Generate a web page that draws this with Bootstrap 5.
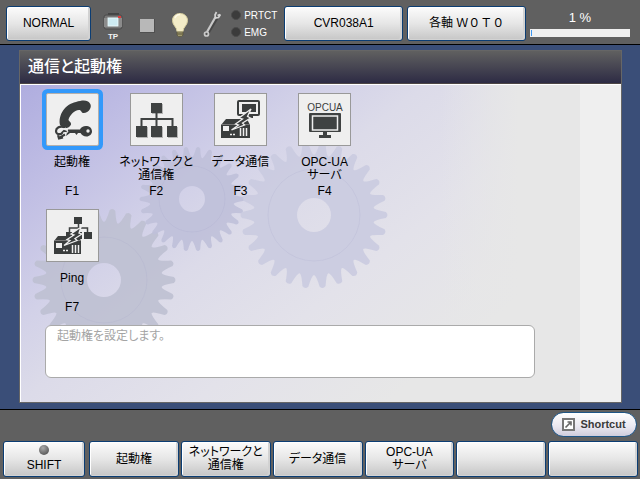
<!DOCTYPE html>
<html lang="ja">
<head>
<meta charset="utf-8">
<meta name="viewport" content="width=device-width, initial-scale=1">
<title>通信と起動権</title>
<link rel="stylesheet" href="https://cdn.jsdelivr.net/npm/bootstrap@5.3.0/dist/css/bootstrap.min.css">
<style>
  body { background: #3a4e78; color: #000; font-family: "Liberation Sans", "Noto Sans CJK JP", sans-serif; font-size: 12px; line-height: 13px; }
  .kana { font-feature-settings: "palt"; }
  .top-bar { background: #606060; border-bottom: 1px solid #000; height: 45px; padding: 6px 10px 3px 6px; }
  .bottom-bar { background: #606060; border-top: 1px solid #000; padding: 2px 2px 3px 3px; }
  .key-btn { --bs-btn-padding-x: 0; --bs-btn-padding-y: 0; --bs-btn-font-size: 12px; --bs-btn-line-height: 13px; --bs-btn-border-radius: 3px;
    --bs-btn-color: #000; --bs-btn-border-color: #0b3d73; --bs-btn-hover-color: #000; --bs-btn-hover-border-color: #0b3d73;
    background: linear-gradient(#fcfcfc, #e6e6e6 50%, #c6c6c6); box-shadow: inset 1px 1px #fff, inset -2px -1px #d2d2d2; }
  .g-mode { flex: 84 1 0; }
  .g-status { flex: 195 1 0; gap: 10px; }
  .g-status > :first-child { margin-left: 10px; }
  .g-prog { flex: 118 1 0; }
  .g-over { flex: 101 1 0; }
  .top-bar .key-btn { height: 35px; }
  .bottom-bar .key-btn { height: 36px; }
  .g-shift { flex: 82 1 0; margin-right: 2px; }
  .g-soft { flex: 90 1 0; }
  .soft-row { gap: 2px; }
  .led { width: 10px; height: 10px; background: #3b3b3b; border: 1px solid #4b4b4b; }
  .led-text { font-size: 10px; color: #fff; }
  .led-row { gap: 3px; }
  .shift-led { width: 10px; height: 10px; background: radial-gradient(circle at 40% 30%, #aaa, #606060 70%); }
  .over-text { font-size: 13px; line-height: 15px; color: #fff; }
  .progress { --bs-progress-height: 8px; --bs-progress-bg: #efefef; --bs-progress-border-radius: 0; --bs-progress-bar-bg: #3b96f0; padding: 1px; }
  .work { padding: 5px 18px 6px 19px; }
  .panel { border: 1px solid #666; }
  .panel-head { background: linear-gradient(#606060, #2d2b44); border-bottom: 1px solid #4c4545; color: #fff; font-size: 16px; line-height: 32px; height: 33px; padding-left: 8px; margin: 0; }
  .panel-body { background: #efefef; border-top: 1px solid #fff; border-left: 1px solid #fff; padding-right: 41px; }
  .scene { background: linear-gradient(90deg, rgba(231,231,231,0) 75%, #e7e7e7 89%), linear-gradient(142deg, #afaddf, #c0bee4 15%, #d2d1e8 31%, #dcdbe9 42%, #e3e2ea 60%, #e7e7e7 80%); padding: 8px 45px 24px 9px; }
  .gears { z-index: 0; }
  .tiles { display: grid; grid-template-columns: repeat(6, minmax(0, 1fr)); row-gap: 11px; }
  .tile { background: none; border: 0; padding: 0; color: #000; }
  .tile-icon { width: 53px; height: 53px; background: #efefef; border: 1px solid #999; }
  .tile-icon.chosen { box-shadow: 0 0 0 4px #3399fb; border-color: #b5b0ac; border-radius: 2px; }
  .tile-label { height: 28px; margin-top: 9px; padding-top: 1px; white-space: nowrap; }
  .tile-key { line-height: 14px; margin-top: 1px; }
  .message { background: #fff; border: 1px solid #aaa; border-radius: 6px; color: #a4a4a4; height: 53px; margin: 11px 0 0 15px; padding: 4px 11px; }
  .shortcut { border: 1px solid #1d5587; border-radius: 13px; background: linear-gradient(#fff, #e9e7f0 60%, #cfccdc); width: 86px; height: 25px; font-size: 11px; font-weight: bold; color: #3a3a3a; padding: 0; gap: 5px; margin-right: 1px; }
  .upper { height: 29px; }
</style>
<script src="https://cdn.jsdelivr.net/npm/bootstrap@5.3.0/dist/js/bootstrap.bundle.min.js"></script>
</head>
<body class="d-flex flex-column min-vh-100">

<header class="top-bar d-flex">
  <button type="button" class="btn key-btn g-mode">NORMAL</button>
  <div class="g-status d-flex align-items-center">
    <svg width="26" height="36" viewBox="0 0 26 36" role="img" aria-label="TP">
      <path d="M8 10V8h9v2" fill="none" stroke="#444" stroke-width="2"/>
      <rect x="3" y="9" width="18" height="14" rx="2" fill="#777" stroke="#4a4a4a"/>
      <rect x="3" y="12" width="3" height="9" fill="#8b8b8b"/><rect x="18" y="12" width="3" height="9" fill="#8b8b8b"/>
      <rect x="7" y="12" width="10" height="8" fill="#cdebf2" stroke="#e8f7fa"/>
      <rect x="17" y="10" width="3" height="2" fill="#e23b3b"/>
      <text x="12" y="33" text-anchor="middle" font-size="8" font-weight="bold" fill="#f2f2f2">TP</text>
    </svg>
    <svg width="22" height="36" viewBox="0 0 22 36" aria-hidden="true">
      <rect x="3" y="13" width="15" height="14" fill="#505050"/><rect x="3" y="13" width="14" height="13" fill="#b8b8b8"/>
    </svg>
    <svg width="22" height="36" viewBox="0 0 22 36" aria-hidden="true">
      <path d="M11 7.500c-4.500 0-7.500 3-7.500 7 0 5 4.500 6.500 4.500 11h6c0-4.500 4.500-6 4.500-11 0-4-3-7-7.500-7z" fill="#f3ecc8" stroke="#d8cf9f"/>
      <path d="M6 12c1-3 3-3.500 5-3.500" stroke="#fffbe8" stroke-width="1.500" fill="none"/>
      <path d="M8 26h6v3l-1.500 1.500h-3L8 29z" fill="#a09a72" stroke="#5a5537" stroke-width=".7"/><path d="M8 28h6" stroke="#5a5537"/>
    </svg>
    <svg width="20" height="36" viewBox="0 0 20 36" aria-hidden="true">
      <g transform="translate(1 1)" opacity=".4"><path d="M6 26L15 11" stroke="#222" stroke-width="3"/></g>
      <path d="M6 26L14.500 11" stroke="#c9c9c9" stroke-width="2.200"/>
      <path d="M15.500 6l-1.500 3 .5 3 3-.5 2-3M19 8.500l-2.500 1" fill="none" stroke="#d2d2d2" stroke-width="1.700"/>
      <circle cx="5.500" cy="28" r="2" fill="#555" stroke="#c9c9c9" stroke-width="1.700"/>
    </svg>
    <div class="d-flex flex-column gap-1">
      <div class="d-flex align-items-center led-row"><span class="led rounded-circle"></span><span class="led-text">PRTCT</span></div>
      <div class="d-flex align-items-center led-row"><span class="led rounded-circle"></span><span class="led-text">EMG</span></div>
    </div>
  </div>
  <button type="button" class="btn key-btn g-prog">CVR038A1</button>
  <button type="button" class="btn key-btn g-prog ms-1">各軸 Ｗ０Ｔ０</button>
  <div class="g-over ms-1 d-flex flex-column justify-content-end pb-1">
    <div class="over-text text-center pb-1">1 %</div>
    <div class="progress" role="progressbar" aria-label="オーバライド" aria-valuenow="1" aria-valuemin="0" aria-valuemax="100"><div class="progress-bar" style="width:1%"></div></div>
  </div>
</header>

<main class="work flex-grow-1 d-flex flex-column">
  <section class="panel flex-grow-1 d-flex flex-column">
    <h1 class="panel-head kana">通信と起動権</h1>
    <div class="panel-body flex-grow-1 d-flex flex-column">
      <div class="scene position-relative flex-grow-1">
        <svg class="gears position-absolute top-0 start-0" width="400" height="270" viewBox="21 85 400 270" aria-hidden="true">
          <g id="gearLayer" fill-rule="evenodd"></g>
        </svg>
        <div class="tiles position-relative">
          <button type="button" class="tile d-flex flex-column align-items-center">
            <span class="tile-icon chosen">
              <svg class="d-block" width="51" height="51" viewBox="1 1 51 51" aria-hidden="true">
                <g fill="#3a3d3d">
                  <path d="M14 32C12 22 19 11 30 9c5-1.500 9-2 12-.5 3 2 3.500 5 2 7.500-1.500 3-5 4.500-7 4-2-.5-1.500-3-4-3-5 .5-9 5-10.500 9.500 0 2 3 2.500 2.500 5-1 3-5 4.500-8 3.500z"/>
                  <path d="M22 36.500h7l5 0c1-2.500 4-4 7-3.500 3.500.5 5 3 5 5.500s-2.500 5-5.500 5c-3 0-4.500-1.500-6-3.500H32l-1.500 2-1.500-2h-5l-4 3z"/>
                </g>
                <path d="M18 34c-4-1.500-8 1-8 4s2 3.500 5 3l3-3 3 1M12 45c3-.5 5-2.500 7-3.500M12 42l1 3.500 4-1" fill="none" stroke="#3a3d3d" stroke-width="2.200"/>
                <path d="M15 37l5-2 2 4-5 1" fill="none" stroke="#efefef" stroke-width="1"/>
                <circle cx="42" cy="38" r="1.700" fill="#efefef"/>
              </svg>
            </span>
            <span class="tile-label kana">起動権</span><span class="tile-key">F1</span>
          </button>
          <button type="button" class="tile d-flex flex-column align-items-center">
            <span class="tile-icon">
              <svg class="d-block" width="51" height="51" viewBox="1 1 51 51" aria-hidden="true">
                <g fill="#b5b5b5"><rect x="22" y="11" width="11" height="10"/><rect x="7" y="34" width="11" height="11"/><rect x="22" y="34" width="11" height="11"/><rect x="38" y="34" width="10" height="11"/></g>
                <path d="M26.500 20v13M11.500 34v-8h31v8" fill="none" stroke="#3f4242" stroke-width="2"/>
                <g fill="#3f4242"><rect x="21" y="10" width="11" height="10"/><rect x="6" y="33" width="11" height="11"/><rect x="21" y="33" width="11" height="11"/><rect x="37" y="33" width="10" height="11"/></g>
              </svg>
            </span>
            <span class="tile-label kana">ネットワークと<br>通信権</span><span class="tile-key">F2</span>
          </button>
          <button type="button" class="tile d-flex flex-column align-items-center">
            <span class="tile-icon">
              <svg class="d-block" width="51" height="51" viewBox="1 1 51 51" aria-hidden="true">
                <rect x="24" y="8" width="21" height="14" rx="1" fill="#efefef" stroke="#3a3d3d" stroke-width="2"/>
                <rect x="28" y="11" width="14" height="8" fill="#3a3d3d"/><path d="M35 23h4v2h-5z" fill="#3a3d3d"/>
                <path d="M12 26h21l3 6v13H7V32z" fill="#3a3d3d"/>
                <path d="M8 31.500h28" stroke="#777"/><rect x="9" y="33" width="6" height="5" fill="#efefef"/>
                <path d="M26.500 35v8M29.500 35v8M32.500 35v8" stroke="#efefef" stroke-width="1.500"/><path d="M16 41.500h2M19 41.500h2" stroke="#efefef" stroke-width="1.500"/>
                <path d="M37 16L25 25l3.500 1-7 5 3 1-7 5 13-5-2-2 8-5-3-1.500z" fill="#3a3d3d" stroke="#efefef" stroke-width="1.300"/>
              </svg>
            </span>
            <span class="tile-label kana">データ通信</span><span class="tile-key">F3</span>
          </button>
          <button type="button" class="tile d-flex flex-column align-items-center">
            <span class="tile-icon">
              <svg class="d-block" width="51" height="51" viewBox="1 1 51 51" aria-hidden="true">
                <text x="27" y="18" text-anchor="middle" font-size="10" fill="#3a3d3d">OPCUA</text>
                <rect x="11" y="20" width="32" height="19" rx="1" fill="#3f4242"/><rect x="14.500" y="23" width="25" height="14" fill="none" stroke="#efefef" stroke-width="1.500"/>
                <path d="M25 39h4v3h4v3H21v-3h4z" fill="#3f4242"/>
              </svg>
            </span>
            <span class="tile-label kana">OPC-UA<br>サーバ</span><span class="tile-key">F4</span>
          </button>
          <span></span><span></span>
          <button type="button" class="tile d-flex flex-column align-items-center">
            <span class="tile-icon">
              <svg class="d-block" width="51" height="51" viewBox="1 1 51 51" aria-hidden="true">
                <path d="M32.500 15v8M23.500 24v-5h18v5" fill="none" stroke="#3f4242" stroke-width="1.500"/>
                <g fill="#3a3d3d"><rect x="28" y="8" width="8" height="7"/><rect x="38" y="23" width="8" height="7"/><rect x="28" y="23" width="8" height="7"/><rect x="20" y="23" width="6" height="5"/>
                <path d="M12 27h21l2 5v13H8V32z"/></g>
                <path d="M9 31.500h26" stroke="#777"/><rect x="10" y="34" width="6" height="5" fill="#efefef"/>
                <path d="M26.500 36v8M29.500 36v8M32.500 36v8" stroke="#efefef" stroke-width="1.500"/><path d="M17 41.500h2M20 41.500h2" stroke="#efefef" stroke-width="1.500"/>
                <path d="M35 18l-10 7 3 1-7 4.500 3 1-6 5 13-5-2-2 7-4.500-3-1z" fill="#3a3d3d" stroke="#efefef" stroke-width="1.300"/>
              </svg>
            </span>
            <span class="tile-label">Ping</span><span class="tile-key">F7</span>
          </button>
        </div>
        <div class="message kana position-relative" role="status">起動権を設定します。</div>
      </div>
    </div>
  </section>
</main>

<footer class="bottom-bar">
  <div class="upper d-flex justify-content-end align-items-start">
    <button type="button" class="shortcut d-flex align-items-center justify-content-center">
      <svg width="13" height="13" viewBox="0 0 13 13" aria-hidden="true"><rect x="1" y="1" width="11" height="11" fill="#fff" stroke="#777" stroke-width="2"/><path d="M3.500 9.500l4.500-4.500M5.500 4h3.500v3.500" fill="none" stroke="#666" stroke-width="1.600"/></svg>
      <span>Shortcut</span>
    </button>
  </div>
  <div class="soft-row d-flex">
    <button type="button" class="btn key-btn g-shift d-flex flex-column align-items-center justify-content-end"><span class="shift-led rounded-circle mb-1"></span><span class="pb-1">SHIFT</span></button>
    <button type="button" class="btn key-btn kana g-soft">起動権</button>
    <button type="button" class="btn key-btn kana g-soft">ネットワークと<br>通信権</button>
    <button type="button" class="btn key-btn kana g-soft">データ通信</button>
    <button type="button" class="btn key-btn kana g-soft">OPC-UA<br>サーバ</button>
    <button type="button" class="btn key-btn g-soft" aria-label="F5"></button>
    <button type="button" class="btn key-btn g-soft" aria-label="F6"></button>
  </div>
</footer>

<script>
  // Decorative gears: centre, outer, root and hole radius, body ring radius, fill
  const gears = [
    [104, 280, 72, 58, 17, 43, 'rgb(190,192,210)'],
    [192, 199, 53, 42, 13, 33, 'rgb(191,192,217)'],
    [314, 215, 74, 60, 17, 46, 'rgb(202,203,224)']
  ];
  const teeth = 26;
  const layer = document.getElementById('gearLayer');
  for (const [cx, cy, outer, root, hole, ring, fill] of gears) {
    const at = (r, a) => (cx + r * Math.cos(a)).toFixed(1) + ' ' + (cy + r * Math.sin(a)).toFixed(1);
    const step = 2 * Math.PI / teeth;
    let d = 'M' + at(root, -step / 2);
    for (let i = 0; i < teeth; i++) {
      const a = i * step;
      d += 'Q' + at(root, a - step * .36) + ' ' + at(outer - 2, a - step * .17)
         + 'Q' + at(outer + 1, a) + ' ' + at(outer - 2, a + step * .17)
         + 'Q' + at(root, a + step * .36) + ' ' + at(root, a + step / 2);
    }
    d += `ZM${cx - hole} ${cy}a${hole} ${hole} 0 1 0 ${2 * hole} 0a${hole} ${hole} 0 1 0 ${-2 * hole} 0Z`;
    layer.insertAdjacentHTML('beforeend',
      `<path d="${d}" fill="${fill}" fill-opacity=".9"/><circle cx="${cx}" cy="${cy}" r="${ring}" fill="none" stroke="#9a9cc0" stroke-opacity=".15"/>`);
  }
</script>
</body>
</html>
